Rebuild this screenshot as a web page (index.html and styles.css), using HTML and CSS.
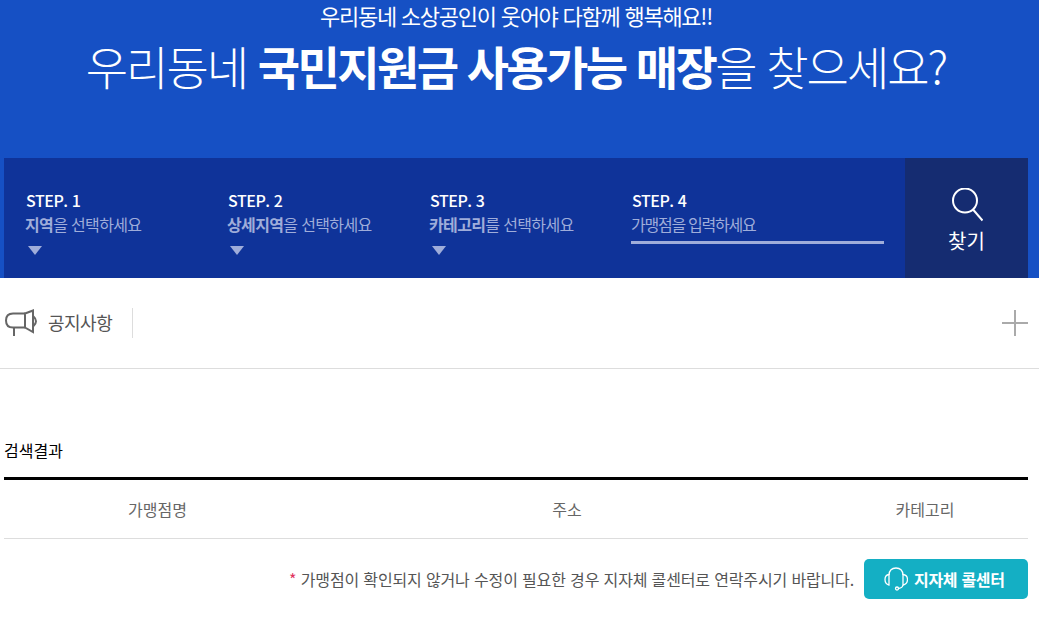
FILE: index.html
```html
<!DOCTYPE html>
<html lang="ko">
<head>
<meta charset="utf-8">
<title>국민지원금 사용가능 매장</title>
<link rel="stylesheet" href="styles.css">
</head>
<body>
<section class="hero">
  <p class="hero-sub">우리동네 소상공인이 웃어야 다함께 행복해요!!</p>
  <h1 class="hero-title">우리동네 <strong>국민지원금 사용가능 매장</strong>을 찾으세요?</h1>
  <form class="search">
    <div class="steps">
      <div class="step">
        <div class="step-num">STEP. 1</div>
        <div class="step-label"><b>지역</b>을 선택하세요</div>
        <span class="arrow"></span>
      </div>
      <div class="step">
        <div class="step-num">STEP. 2</div>
        <div class="step-label"><b>상세지역</b>을 선택하세요</div>
        <span class="arrow"></span>
      </div>
      <div class="step">
        <div class="step-num">STEP. 3</div>
        <div class="step-label"><b>카테고리</b>를 선택하세요</div>
        <span class="arrow"></span>
      </div>
      <div class="step step-input">
        <div class="step-num">STEP. 4</div>
        <div class="step-label underline">가맹점을 입력하세요</div>
      </div>
    </div>
    <button class="find" type="button">
      <svg class="find-icon" width="32" height="36" viewBox="0 0 32 36" fill="none" stroke="#fff" stroke-width="2"><circle cx="14" cy="12.500" r="12"/><path d="M22 21.500 L31.500 32.500"/></svg>
      <span>찾기</span>
    </button>
  </form>
</section>
<section class="notice">
  <svg class="notice-icon" width="34" height="28" viewBox="0 0 34 28" fill="none" stroke="#666" stroke-width="2"><path d="M20 4.500 H8 Q1 4.500 1 11.500 Q1 18.500 8 18.500 H20"/><path d="M20 4.500 L28 1.500 V23 L20 18.500 Z"/><path d="M28.500 7.500 Q33.500 12 28.500 17"/><path d="M9 18.500 V27"/></svg>
  <span class="notice-title">공지사항</span>
  <span class="notice-rule"></span>
  <span class="plus"></span>
</section>
<section class="results">
  <h2 class="results-title">검색결과</h2>
  <div class="table-head">
    <div class="col-name">가맹점명</div>
    <div class="col-addr">주소</div>
    <div class="col-cat">카테고리</div>
  </div>
  <div class="contact">
    <p class="contact-note"><span class="star">*</span> 가맹점이 확인되지 않거나 수정이 필요한 경우 지자체 콜센터로 연락주시기 바랍니다.</p>
    <a class="call-btn">
      <svg width="24" height="24" viewBox="0 0 24 24" fill="none" stroke="#fff" stroke-width="1.300"><path d="M5 8 Q5.500 1 12 1 Q18.500 1 19 8"/><path d="M5 7.500 Q1 8 1 12.500 Q1 17 5 18 Z"/><path d="M19 7.500 Q23.500 8 23.500 12.500 Q23.500 17 19 18 Z"/><path d="M19 18 Q18.500 21 14.500 21.500"/><circle cx="13" cy="21.500" r="1.500"/></svg>
      <span>지자체 콜센터</span>
    </a>
  </div>
</section>
</body>
</html>
```
FILE: styles.css
```css
* { box-sizing: border-box; }
html, body { margin: 0; padding: 0; }
body {
  background: #fff;
  font-family: "Noto Sans CJK KR", "Noto Sans", sans-serif;
  overflow: hidden;
}
.hero {
  background: #1650c4;
  height: 278px;
  padding: 0 11px 0 4px;
  display: flex;
  flex-direction: column;
  color: #fff;
}
.hero-sub {
  margin: 0;
  height: 30px;
  line-height: 30px;
  text-align: center;
  font-size: 22px;
  font-weight: 400;
  letter-spacing: -1.250px;
}
.hero-title {
  margin: 0;
  height: 70px;
  line-height: 70px;
  text-align: center;
  font-size: 46px;
  font-weight: 300;
  letter-spacing: -2.050px;
}
.hero-title strong {
  font-weight: 700;
  letter-spacing: -2.600px;
}
.search {
  margin-top: auto;
  height: 120px;
  display: flex;
  background: #0f3399;
}
.steps {
  flex: 1;
  display: flex;
  padding: 32px 0 0 22px;
}
.step { width: 202px; }
.step-input { width: 252px; }
.step-num {
  font-size: 16px;
  line-height: 20px;
  font-weight: 500;
  letter-spacing: -.45px;
  color: #fff;
}
.step-label {
  margin-top: 4px;
  margin-left: -1px;
  font-size: 16px;
  line-height: 20px;
  letter-spacing: -.65px;
  color: #9fadda;
}
.step-label b { font-weight: 700; }
.underline {
  height: 30px;
  letter-spacing: -1.250px;
  border-bottom: 3px solid #9fadda;
}
.arrow {
  display: block;
  margin: 12px 0 0 2px;
  width: 0;
  height: 0;
  border-left: 7px solid transparent;
  border-right: 7px solid transparent;
  border-top: 9px solid #9fadda;
}
.find {
  width: 123px;
  border: 0;
  padding: 30px 0 0;
  background: #152c71;
  color: #fff;
  font: inherit;
  font-size: 20px;
  font-weight: 400;
  line-height: 26px;
  display: flex;
  flex-direction: column;
  align-items: center;
}
.find-icon { margin-bottom: 4px; }
.notice {
  height: 91px;
  padding: 0 11px 0 5px;
  border-bottom: 1px solid #ddd;
  display: flex;
  align-items: center;
}
.notice-title {
  margin: 0 0 3px 9px;
  font-size: 18px;
  letter-spacing: -.5px;
  color: #555;
}
.notice-rule {
  margin-left: 20px;
  width: 1px;
  height: 30px;
  background: #ddd;
}
.plus {
  margin-left: auto;
  width: 26px;
  height: 26px;
  background:
    linear-gradient(#aaa, #aaa) center / 26px 2px no-repeat,
    linear-gradient(#aaa, #aaa) center / 2px 26px no-repeat;
}
.results { padding: 0 11px 0 4px; }
.results-title {
  margin: 0;
  padding-top: 69px;
  height: 111px;
  border-bottom: 3px solid #000;
  font-size: 16px;
  line-height: 24px;
  font-weight: 400;
  color: #000;
}
.table-head {
  height: 59px;
  display: flex;
  align-items: center;
  border-bottom: 1px solid #ddd;
  font-size: 16px;
  color: #666;
  text-align: center;
}
.col-name { width: 307px; }
.col-addr { width: 512px; }
.col-cat { width: 204px; }
.contact {
  margin-top: 20px;
  display: flex;
  justify-content: flex-end;
  align-items: center;
}
.contact-note {
  margin: 0 10px 0 0;
  font-size: 16px;
  letter-spacing: -.15px;
  color: #555;
}
.star { color: #e0345f; }
.call-btn {
  width: 164px;
  height: 40px;
  padding-left: 20px;
  border-radius: 5px;
  background: #14afc4;
  color: #fff;
  font-size: 16px;
  font-weight: 700;
  letter-spacing: -.3px;
  display: flex;
  align-items: center;
  gap: 6px;
}
```
